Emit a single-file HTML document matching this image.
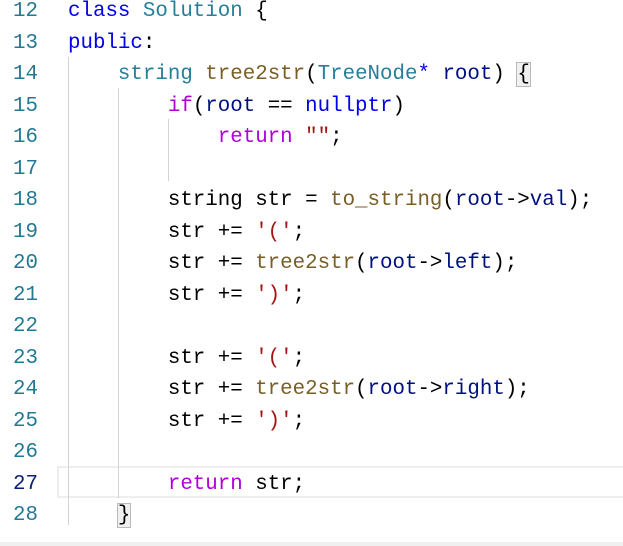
<!DOCTYPE html>
<html><head><meta charset="utf-8"><style>
body{margin:0;width:623px;height:546px;background:#fff;overflow:hidden;position:relative;font-family:"Liberation Mono","DejaVu Sans Mono",monospace;font-size:20.8px}
.l{position:absolute;left:0;height:31.5px;line-height:31.5px;white-space:pre;width:623px}
.n{position:absolute;left:0;width:38px;text-align:right;color:#237893}
.c{position:absolute;left:68px;color:#000}
.k{color:#0000ee}.t{color:#267f99}.f{color:#795e26}.v{color:#001080}.p{color:#af00db}.s{color:#a31515}
.g{position:absolute;width:1px;background:#d3d3d3}
.b{outline:1px solid #b9b9b9;background:#f0f0f0}
</style></head><body>
<div style="position:absolute;left:57px;top:466px;width:570px;height:28px;border:2px solid #eeeeee"></div>
<div class="g" style="left:68px;top:57px;height:468px"></div>
<div class="g" style="left:118px;top:88px;height:410px"></div>
<div class="g" style="left:168px;top:119px;height:62px"></div>
<div style="position:absolute;left:0;top:542px;width:623px;height:4px;background:#f0f0f0"></div>
<div style="position:absolute;left:0;top:2px;width:623px;height:540px">
<div class="l" style="top:-6px"><span class="n">12</span><span class="c"><span class="k">class</span> <span class="t">Solution</span> {</span></div>
<div class="l" style="top:25.5px"><span class="n">13</span><span class="c"><span class="k">public</span>:</span></div>
<div class="l" style="top:57px"><span class="n">14</span><span class="c">    <span class="t">string</span> <span class="f">tree2str</span>(<span class="t">TreeNode</span><span class="k">*</span> <span class="v">root</span>) <span class="b">{</span></span></div>
<div class="l" style="top:88.5px"><span class="n">15</span><span class="c">        <span class="p">if</span>(<span class="v">root</span> == <span class="k">nullptr</span>)</span></div>
<div class="l" style="top:120px"><span class="n">16</span><span class="c">            <span class="p">return</span> <span class="s">""</span>;</span></div>
<div class="l" style="top:151.5px"><span class="n">17</span></div>
<div class="l" style="top:183px"><span class="n">18</span><span class="c">        string str = <span class="f">to_string</span>(<span class="v">root</span>-&gt;<span class="v">val</span>);</span></div>
<div class="l" style="top:214.5px"><span class="n">19</span><span class="c">        str += <span class="s">'('</span>;</span></div>
<div class="l" style="top:246px"><span class="n">20</span><span class="c">        str += <span class="f">tree2str</span>(<span class="v">root</span>-&gt;<span class="v">left</span>);</span></div>
<div class="l" style="top:277.5px"><span class="n">21</span><span class="c">        str += <span class="s">')'</span>;</span></div>
<div class="l" style="top:309px"><span class="n">22</span></div>
<div class="l" style="top:340.5px"><span class="n">23</span><span class="c">        str += <span class="s">'('</span>;</span></div>
<div class="l" style="top:372px"><span class="n">24</span><span class="c">        str += <span class="f">tree2str</span>(<span class="v">root</span>-&gt;<span class="v">right</span>);</span></div>
<div class="l" style="top:403.5px"><span class="n">25</span><span class="c">        str += <span class="s">')'</span>;</span></div>
<div class="l" style="top:435px"><span class="n">26</span></div>
<div class="l" style="top:466.5px"><span class="n" style="color:#0b216f">27</span><span class="c">        <span class="p">return</span> str;</span></div>
<div class="l" style="top:498px"><span class="n">28</span><span class="c">    <span class="b">}</span></span></div>
</div>
</body></html>
